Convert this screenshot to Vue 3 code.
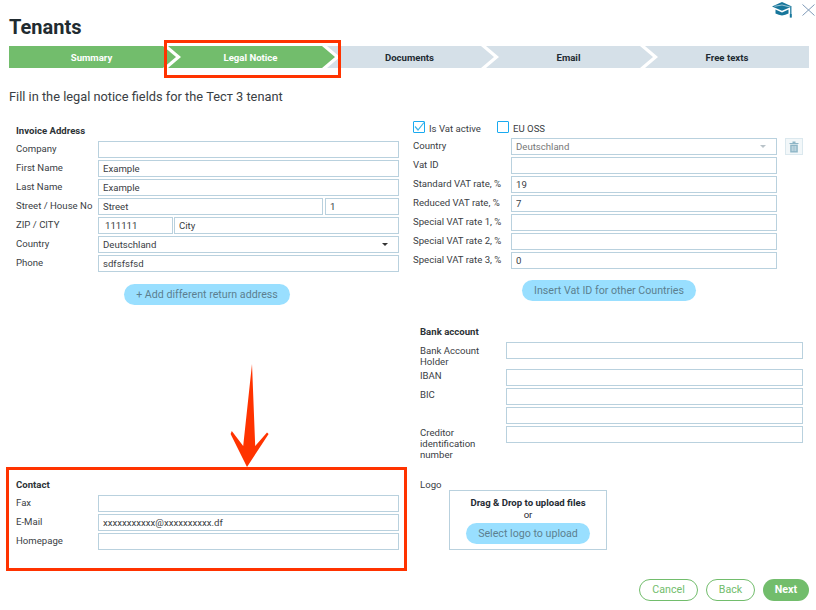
<script setup>
const steps = [
  { label: 'Summary', done: true },
  { label: 'Legal Notice', done: true },
  { label: 'Documents', done: false },
  { label: 'Email', done: false },
  { label: 'Free texts', done: false },
]
const vatRows = [
  { label: 'Vat ID', value: '' },
  { label: 'Standard VAT rate, %', value: '19' },
  { label: 'Reduced VAT rate, %', value: '7' },
  { label: 'Special VAT rate 1, %', value: '' },
  { label: 'Special VAT rate 2, %', value: '' },
  { label: 'Special VAT rate 3, %', value: '0' },
]
</script>

<template>
  <div class="page">
    <header class="head">
      <h1 class="title">Tenants</h1>
      <div class="head-icons">
        <svg class="cap" width="22" height="17" viewBox="0 0 22 17">
          <path d="M11 1 L21 5.4 L11 9.8 L1 5.4 Z" fill="#17769b" />
          <path d="M4.5 8.6 L11 11.5 L17.5 8.6 L17.5 12.6 Q11 16.2 4.5 12.6 Z" fill="#17769b" />
          <path d="M3.5 5.3 L11 4 M11 4 L19.8 6.2 L19.8 13" fill="none" stroke="#d9e9ef" stroke-width="0.7" />
          <path d="M19.8 6 L19.8 13" stroke="#17769b" stroke-width="1.2" />
          <rect x="18.8" y="13" width="2" height="3.6" fill="#17769b" />
        </svg>
        <svg class="close" width="13" height="12" viewBox="0 0 13 12">
          <path d="M0.5 0.5 L12.5 11.5 M12.5 0.5 L0.5 11.5" stroke="#7f9ab8" stroke-width="1" fill="none" />
        </svg>
      </div>
    </header>

    <nav class="steps">
      <div
        v-for="(s, i) in steps"
        :key="s.label"
        class="step"
        :class="{ done: s.done, first: i === 0, last: i === steps.length - 1 }"
      >{{ s.label }}</div>
    </nav>

    <p class="desc">Fill in the legal notice fields for the Тест 3 tenant</p>

    <div class="cols">
      <section class="left">
        <h2 class="heading">Invoice Address</h2>
        <div class="row"><label>Company</label><input class="field" value="" /></div>
        <div class="row"><label>First Name</label><input class="field" value="Example" /></div>
        <div class="row"><label>Last Name</label><input class="field" value="Example" /></div>
        <div class="row">
          <label>Street / House No</label>
          <div class="pair street"><input class="field" value="Street" /><input class="field" value="1" /></div>
        </div>
        <div class="row">
          <label>ZIP / CITY</label>
          <div class="pair zip"><input class="field" value="111111" /><input class="field" value="City" /></div>
        </div>
        <div class="row">
          <label>Country</label>
          <div class="field select">Deutschland<span class="caret dark"></span></div>
        </div>
        <div class="row"><label>Phone</label><input class="field" value="sdfsfsfsd" /></div>
        <div class="center-btn add-wrap"><button class="pill add">+ Add different return address</button></div>

        <div class="contact">
          <h2 class="heading">Contact</h2>
          <div class="row"><label>Fax</label><input class="field" value="" /></div>
          <div class="row"><label>E-Mail</label><input class="field" value="xxxxxxxxxxx@xxxxxxxxxx.df" /></div>
          <div class="row"><label>Homepage</label><input class="field" value="" /></div>
        </div>
      </section>

      <section class="right">
        <div class="checks">
          <span class="check-item first-check">
            <span class="box">
              <svg width="12" height="12" viewBox="0 0 12 12">
                <path d="M2 5.5 L5 9 L11 1.5" fill="none" stroke="#3fb4e8" stroke-width="1.2" />
              </svg>
            </span>
            Is Vat active
          </span>
          <span class="check-item"><span class="box"></span>EU OSS</span>
        </div>
        <div class="vat-row">
          <label>Country</label>
          <div class="field select muted">Deutschland<span class="caret"></span></div>
          <span class="trash">
            <svg width="10" height="12" viewBox="0 0 10 12">
              <path d="M0.5 2 H9.5 V3 H0.5 Z M3.5 0.5 H6.5 V2 H3.5 Z" fill="#8db5c6" />
              <path d="M1.2 3.6 H8.8 V11.5 H1.2 Z" fill="#8db5c6" />
              <path d="M3.2 5 V10.2 M5 5 V10.2 M6.8 5 V10.2" stroke="#dfecf1" stroke-width="0.8" />
            </svg>
          </span>
        </div>
        <div v-for="r in vatRows" :key="r.label" class="vat-row">
          <label>{{ r.label }}</label>
          <input class="field" :value="r.value" />
        </div>
        <div class="center-btn insert-wrap"><button class="pill insert">Insert Vat ID for other Countries</button></div>

        <div class="bank">
          <h2 class="heading">Bank account</h2>
          <div class="bank-row two"><label>Bank Account Holder</label><input class="field" value="" /></div>
          <div class="bank-row"><label>IBAN</label><input class="field" value="" /></div>
          <div class="bank-row"><label>BIC</label><input class="field" value="" /></div>
          <div class="bank-row"><label></label><input class="field" value="" /></div>
          <div class="bank-row three"><label>Creditor identification number</label><input class="field" value="" /></div>
          <div class="logo-row">
            <span class="logo-label">Logo</span>
            <div class="drop">
              <strong>Drag &amp; Drop to upload files</strong>
              <span class="or">or</span>
              <button class="pill select-logo">Select logo to upload</button>
            </div>
          </div>
        </div>
      </section>
    </div>

    <footer class="foot">
      <button class="ghost cancel">Cancel</button>
      <button class="ghost back">Back</button>
      <button class="next">Next</button>
    </footer>

    <div class="mark mark-step"></div>
    <div class="mark mark-contact"></div>
    <svg class="arrow" width="44" height="108" viewBox="0 0 44 108">
      <path d="M22 1 L25.2 83 L37 69.5 L38.6 71 L17 104 L0.6 71 L1.8 68 L13.2 83 Z"
        fill="#ff3300" stroke="#fff" stroke-width="1" stroke-linejoin="round" paint-order="stroke" />
    </svg>
  </div>
</template>

<style>
html, body { margin: 0; background: #fff; }
</style>

<style scoped>
.page {
  position: relative;
  width: 816px;
  height: 610px;
  overflow: hidden;
  background: #fff;
  font-family: Roboto, "Liberation Sans", sans-serif;
  font-size: 9.6px;
  color: #3a4044;
}
.head {
  height: 46px;
  display: flex;
  justify-content: space-between;
  padding: 0 1px 0 9px;
  box-sizing: border-box;
}
.title {
  margin: 16px 0 0;
  font-size: 20px;
  line-height: 22px;
  font-weight: 700;
  color: #212b30;
}
.head-icons {
  display: flex;
  align-items: flex-start;
  gap: 9px;
  padding-top: 1px;
}
.close { margin-top: 3px; }
.steps {
  display: flex;
  padding-left: 9px;
  height: 22px;
}
.step {
  box-sizing: border-box;
  width: 167px;
  margin-right: -8px;
  padding-right: 2px;
  height: 22px;
  line-height: 23px;
  text-align: center;
  font-weight: 700;
  font-size: 9.6px;
  color: #1f2b33;
  background: #d5e0e8;
  clip-path: polygon(0 0, 154px 0, 167px 11px, 154px 22px, 0 22px, 13px 11px);
}
.step.first {
  clip-path: polygon(0 0, 154px 0, 167px 11px, 154px 22px, 0 22px);
}
.step.last {
  width: 164px;
  margin-right: 0;
  padding-right: 0;
  clip-path: polygon(0 0, 164px 0, 164px 22px, 0 22px, 13px 11px);
}
.step.done {
  background: #72bd6c;
  color: #fff;
}
.desc {
  margin: 21px 0 0 9px;
  font-size: 12.8px;
  line-height: 16px;
  color: #3a4044;
}
.cols {
  display: grid;
  grid-template-columns: 408px 408px;
  margin-top: 17px;
}
.left { padding: 0 9px 0 16px; box-sizing: border-box; }
.right { padding-left: 5px; box-sizing: border-box; }
.heading {
  margin: 0;
  height: 19px;
  line-height: 18px;
  font-size: 9.6px;
  font-weight: 700;
  color: #2c3236;
}
.field {
  display: block;
  box-sizing: border-box;
  height: 17px;
  min-width: 0;
  width: 100%;
  margin: 0;
  padding: 0 4px;
  border: 1px solid #b9d1de;
  border-radius: 0;
  background: #fff;
  outline: none;
  font-family: inherit;
  font-size: 9.6px;
  line-height: 15px;
  color: #3a4044;
}
.row {
  display: grid;
  grid-template-columns: 82px 301px;
  height: 17px;
  margin-bottom: 2px;
}
.row label, .vat-row label, .bank-row label, .logo-label {
  font-size: 9.6px;
  line-height: 15px;
  color: #3a4044;
}
.pair { display: grid; gap: 2px; }
.street { grid-template-columns: 225px 74px; }
.zip { grid-template-columns: 75px 225px; gap: 1px; }
.zip .field:first-child { padding-left: 6px; }
.select {
  position: relative;
}
.muted { color: #777; }
.caret {
  position: absolute;
  right: 10px;
  top: 6px;
  border-left: 3px solid transparent;
  border-right: 3px solid transparent;
  border-top: 3px solid #b9c3c9;
}
.caret.dark { border-top-color: #333; }
.center-btn { display: flex; }
.pill {
  height: 21px;
  border: 0;
  border-radius: 11px;
  background: #99dfff;
  color: #5c7f90;
  font-family: inherit;
  font-size: 10.67px;
  padding: 0;
}
.add-wrap { margin-top: 12px; padding-left: 108px; }
.add { width: 166px; }
.contact { margin-top: 171px; }
.checks {
  display: flex;
  height: 16px;
  font-size: 9.6px;
  line-height: 13px;
}
.check-item {
  display: inline-flex;
  align-items: flex-start;
}
.first-check { width: 84px; }
.box {
  box-sizing: border-box;
  width: 12px;
  height: 12px;
  margin-right: 4px;
  border: 1px solid #19aaf0;
  border-radius: 1px;
  position: relative;
  top: -1px;
}
.box svg { display: block; margin: -1px; }
.vat-row {
  display: grid;
  grid-template-columns: 98px 266px 26px;
  height: 17px;
  margin-bottom: 2px;
}
.trash {
  justify-self: end;
  box-sizing: border-box;
  width: 18px;
  height: 17px;
  display: flex;
  align-items: center;
  justify-content: center;
  border: 1px solid #dbe8ee;
  background: #f2f7f9;
}
.insert-wrap { margin-top: 11px; padding-left: 109px; }
.insert { width: 174px; }
.bank { margin-top: 22px; padding-left: 7px; }
.bank-row {
  display: grid;
  grid-template-columns: 86px 297px;
  height: 17px;
  margin-bottom: 2px;
}
.bank-row label { line-height: 11px; padding-top: 1px; }
.bank-row.two { height: 27px; margin-bottom: 0; }
.bank-row.three { height: 35px; margin-bottom: 18px; }
.bank-row.three label { width: 66px; }
.bank-row.two label { width: 70px; padding-top: 3px; }
.logo-row { display: flex; align-items: flex-start; }
.logo-label { width: 29px; line-height: 12px; }
.drop {
  box-sizing: border-box;
  width: 158px;
  height: 60px;
  margin-top: 11px;
  border: 1px solid #b9d1de;
  display: flex;
  flex-direction: column;
  align-items: center;
  padding-top: 6px;
  color: #1f2b33;
}
.drop strong { font-size: 9.6px; line-height: 12px; font-weight: 700; }
.or { font-size: 9.6px; line-height: 11px; }
.select-logo { width: 124px; margin-top: 3px; }
.foot {
  display: flex;
  justify-content: flex-end;
  gap: 8px;
  margin-top: 27px;
  padding-right: 7px;
}
.ghost, .next {
  box-sizing: border-box;
  height: 22px;
  border-radius: 11px;
  padding: 0;
  font-family: inherit;
  font-size: 10.67px;
  line-height: 20px;
}
.ghost {
  border: 1px solid #72bd6c;
  background: #fff;
  color: #72bd6c;
}
.cancel { width: 59px; }
.back { width: 49px; }
.next {
  width: 46px;
  border: 0;
  background: #72bd6c;
  color: #fff;
  font-weight: 700;
}
.mark {
  position: absolute;
  box-sizing: border-box;
  border: 3px solid #ff3300;
  pointer-events: none;
}
.mark-step { left: 164px; top: 40px; width: 177px; height: 38px; }
.mark-contact { left: 6px; top: 467px; width: 401px; height: 104px; }
.arrow {
  position: absolute;
  left: 230px;
  top: 363px;
  pointer-events: none;
}
</style>
